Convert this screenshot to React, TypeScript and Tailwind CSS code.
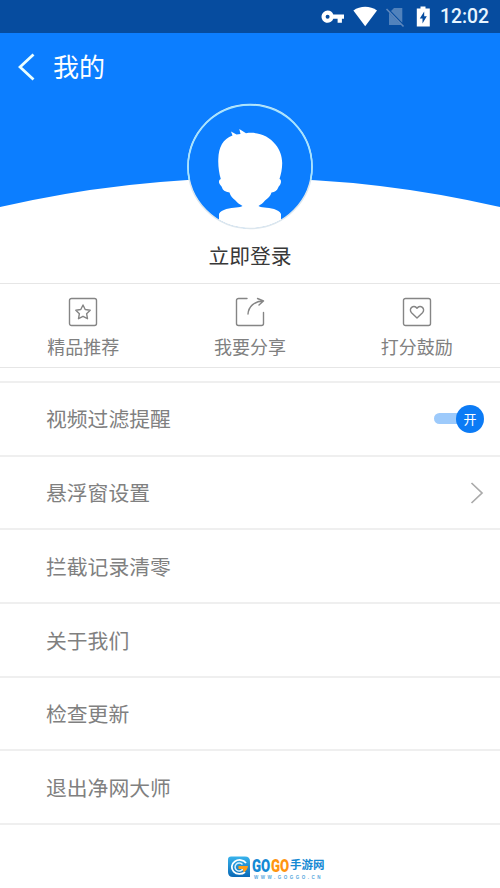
import type { ReactNode } from "react";

const SETTINGS = [
  { label: "视频过滤提醒", kind: "switch" },
  { label: "悬浮窗设置", kind: "link" },
  { label: "拦截记录清零" },
  { label: "关于我们" },
  { label: "检查更新" },
  { label: "退出净网大师" },
];

function StatusBar() {
  return (
    <div className="flex h-[33px] items-center bg-[#064c9f] pl-[320px] text-white">
      <svg className="h-[33px] w-[115px] shrink-0" viewBox="320 0 115 33" fill="currentColor">
        {/* vpn key */}
        <path
          fillRule="evenodd"
          d="M327.6 10.6a6.1 6.1 0 0 1 5.7 4H344v4.2h-2.1v4h-4.3v-4h-4.3a6.1 6.1 0 1 1-5.700-8.200Zm0 4.100a2 2 0 1 0 0 4 2 2 0 0 0 0-4Z"
        />
        {/* wifi */}
        <path d="M353.4 10.6c6.8-5 16.8-5 23.6 0L365.2 26.3Z" />
        {/* no sim */}
        <path d="M394 8h8.3v14.800L391 11Z M389 12.800l12.500 12.300H389Z" opacity=".3" />
        <path d="m386.500 9 17 17.500" stroke="#5f88bd" strokeWidth="1.6" />
        {/* battery */}
        <path
          fillRule="evenodd"
          d="M420.500 6.500h5v2h4.300v18h-13v-18h3.700Zm3.700 5-4.400 7h2.700v5l4.300-7.200h-2.600Z"
        />
      </svg>
      <span className="ml-[5px] font-[Roboto,sans-serif] text-[19.3px] font-medium leading-none text-[#e8f5ff]">12:02</span>
    </div>
  );
}

function Hero() {
  return (
    <svg className="block h-[135px] w-[500px]" viewBox="0 100 500 135">
      <path d="M0 100H500V207Q250 149.4 0 207Z" fill="#0c7eff" />
      <circle cx="250" cy="166.500" r="62" fill="#0c7eff" />
      <path
        d="M219 220V214C221 209 231 208 236 207.500C239 207.200 241.500 207 242.500 206C240 204.500 237.500 203 235.500 200.500C232.500 198 230.500 196 229.500 192.500C225 192 222.500 190 222 187.500C221.500 185.500 219.500 185 219 182.500C218.800 180.800 219.500 179.500 220.800 179C219 173 218 166 218.300 159C218.700 147 223 139 232.500 135.500L231 131.500L236.500 134.500L240.500 134L239.300 129L246 133.200C258 131.500 269 136 275.500 144.500C280 150 282 156 282.200 163C282.200 169 281 174 279.500 179C281 179.500 281.200 181 280.800 183C280.300 185.500 278.500 186 278 188C277 190.500 275 192 271.500 192.500C270.500 196 268 198 265 200.500C263 203 261 204.500 258.500 206C259.500 207 261.500 207.200 264.500 207.500C270 208 279 209 281 214V220A62 62 0 0 1 219 220Z"
        fill="#fff"
      />
      <circle cx="250" cy="166.500" r="62" fill="none" stroke="#dde7ee" strokeWidth="1.500" />
      <path d="M189.400 180A62 62 0 1 1 310.600 180" fill="none" stroke="#a5e4ff" strokeWidth="1.600" />
    </svg>
  );
}

function Action({ label, children }: { label: string; children: ReactNode }) {
  return (
    <div className="flex flex-col items-center pt-[13px]">
      <svg
        className="h-[30px] w-[30px]"
        viewBox="0 0 30 30"
        fill="none"
        stroke="#858585"
        strokeWidth="1.400"
        strokeLinejoin="round"
        strokeLinecap="round"
      >
        {children}
      </svg>
      <span className="mt-[6px] text-[18px] leading-[26px] text-[#808080]">{label}</span>
    </div>
  );
}

function Switch() {
  return (
    <div className="flex items-center">
      <div className="h-[11px] w-[26px] rounded-l-full bg-[#9dcafb]" />
      <div className="-ml-[4px] flex h-[28px] w-[28px] items-center justify-center rounded-full bg-[#0c7bf5] text-[13px] leading-none text-white">
        开
      </div>
    </div>
  );
}

function Watermark() {
  return (
    <div className="flex items-start pl-[227px] pt-[31px]">
      <svg className="h-[22px] w-[24px] shrink-0" viewBox="0 0 24 22">
        <defs>
          <linearGradient id="badge" x1="0" y1="0" x2="0" y2="1">
            <stop offset="0" stopColor="#38b3ec" />
            <stop offset="1" stopColor="#0969b6" />
          </linearGradient>
        </defs>
        <path d="M4 .5h14q5 0 5 5V21H6q-5 0-5-5V3.500q0-3 3-3Z" fill="url(#badge)" />
        <path d="M19 7a7.800 7 0 1 0-1 9" fill="none" stroke="#fff" strokeWidth="1.800" />
        <path d="M15.500 8.500a4.200 4 0 1 0 .4 4.500" fill="none" stroke="#d8f2ff" strokeWidth="1.500" />
        <path d="M11.500 10h9.500q-.5 4-4.500 6.500l-.5-3.500h-4.500Z" fill="#ff9d16" />
      </svg>
      <div className="ml-[1px] w-[73px]">
        <div className="flex h-[18px] items-center whitespace-nowrap">
          <svg className="h-[18px] w-[38px] shrink-0 overflow-visible" viewBox="0 0 38 18" fontFamily="Roboto, sans-serif" fontWeight="900" fontSize="19">
            <text transform="translate(0 16) scale(.7 1)" fill="#1489d4">GO</text>
            <text transform="translate(19 16) scale(.7 1)" fill="#ff9510">GO</text>
          </svg>
          <span className="text-[11.500px] font-bold leading-none text-[#1489d4]">手游网</span>
        </div>
        <div className="mt-px whitespace-nowrap pl-[2px] font-['Liberation_Sans',sans-serif] text-[4.500px] font-bold leading-[5px] tracking-[2.500px] text-[#58a9dd]">
          WWW.GOGGO.CN
        </div>
      </div>
    </div>
  );
}

export default function App() {
  return (
    <div className="h-[888px] w-[500px] overflow-hidden bg-white font-['Noto_Sans_CJK_SC',sans-serif]">
      <StatusBar />
      <header className="flex h-[67px] items-center bg-[#0c7eff] pl-[18px] text-white">
        <svg className="h-[28px] w-[17px]" viewBox="0 0 17 28" fill="none" stroke="#eaffff" strokeWidth="2.800">
          <path d="M15.500 1.500 2 14l13.500 12.500" />
        </svg>
        <h1 className="-mt-[2px] ml-[18px] text-[26px] leading-none">我的</h1>
      </header>
      <Hero />
      <div className="flex h-[48px] justify-center pt-[5px] text-[20.800px] leading-[30px] text-[#383838]">立即登录</div>

      <div className="grid h-[85px] grid-cols-3 border-y border-[#e6e6e6]">
        <Action label="精品推荐">
          <rect x="1.500" y="1.500" width="27" height="27" rx="2" />
          <path d="m15 8 2.200 4.500 5 .7-3.600 3.500.9 5-4.500-2.400-4.500 2.400.9-5-3.600-3.500 5-.7Z" />
        </Action>
        <Action label="我要分享">
          <path d="M12 1.500H3.500a2 2 0 0 0-2 2v23a2 2 0 0 0 2 2h23a2 2 0 0 0 2-2V15.500" />
          <path d="M13 17c.5-7 6-13 15.500-13M22.500 1.500l6 2.500-4.500 4" />
        </Action>
        <Action label="打分鼓励">
          <rect x="1.500" y="1.500" width="27" height="27" rx="2" />
          <path d="m15 21-5.500-5.300c-3.500-3.700 2-9 5.500-4.500 3.500-4.500 9 .8 5.500 4.500Z" />
        </Action>
      </div>

      <ul className="mt-[13px] border-t-2 border-[#efefef]">
        {SETTINGS.map((item) => (
          <li
            key={item.label}
            className="flex h-[73.700px] items-center justify-between border-b-2 border-[#efefef] pl-[46px] pr-[16px] text-[20.800px] leading-none text-[#808080]"
          >
            <span>{item.label}</span>
            {item.kind === "switch" && <Switch />}
            {item.kind === "link" && (
              <svg className="h-[24px] w-[14px]" viewBox="0 0 14 24" fill="none" stroke="#aaa" strokeWidth="1.700">
                <path d="M1.500 2 12 12 1.500 22" />
              </svg>
            )}
          </li>
        ))}
      </ul>
      <Watermark />
    </div>
  );
}
